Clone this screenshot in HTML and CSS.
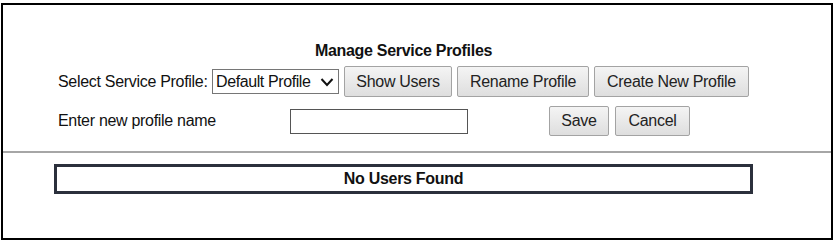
FILE: index.html
```html
<!DOCTYPE html>
<html>
<head>
  <meta charset="utf-8">
  <title>Manage Service Profiles</title>
  <link rel="stylesheet" href="styles.css">
</head>
<body>
  <div class="panel">
    <div class="profiles">
      <div class="profiles-title">Manage Service Profiles</div>
      <div class="row row-select">
        <label for="profileSelect" class="row-label">Select Service Profile:</label>
        <span class="select-wrap">
          <select id="profileSelect" class="profile-select">
            <option>Default Profile</option>
          </select>
          <svg class="select-arrow" width="14" height="10" viewBox="0 0 14 10">
            <path d="M1.5 2 L7 8 L12.5 2" fill="none" stroke="#111" stroke-width="2"/>
          </svg>
        </span>
        <button class="btn btn-show">Show Users</button>
        <button class="btn btn-rename">Rename Profile</button>
        <button class="btn btn-create">Create New Profile</button>
      </div>
      <div class="row row-rename">
        <label for="newName" class="row-label name-label">Enter new profile name</label>
        <input type="text" id="newName" class="name-input">
        <div class="rename-actions">
          <button class="btn btn-save">Save</button>
          <button class="btn btn-cancel">Cancel</button>
        </div>
      </div>
    </div>
    <hr class="divider">
    <div class="profiles">
      <div class="users-box">No Users Found</div>
    </div>
  </div>
</body>
</html>
```

FILE: styles.css
```css
body {
    margin: 3px 0 0 1px;
    font-family: "Liberation Sans", Arial, sans-serif;
    font-size: 16px;
    color: #111;
    background: #fff;
}

.panel {
    width: 828px;
    height: 233px;
    border: 2px solid #000;
    background: #fff;
}

.profiles {
    width: 699px;
    margin-left: 51px;
}

.profiles-title {
    margin-top: 37px;
    line-height: 18px;
    font-weight: bold;
    letter-spacing: -0.3px;
    text-align: center;
    white-space: nowrap;
}

.row {
    display: flex;
    align-items: center;
    padding-left: 4px;
    white-space: nowrap;
    letter-spacing: -0.3px;
}

.row > * {
    flex-shrink: 0;
}

.row-select {
    margin-top: 6px;
    height: 31px;
    gap: 5px;
}

.row-select .row-label {
    width: 149px;
}

.row-rename {
    margin-top: 9px;
    height: 30px;
}

.name-label {
    width: 232px;
}

.select-wrap {
    position: relative;
    display: inline-block;
    height: 25px;
}

.profile-select {
    -webkit-appearance: none;
    appearance: none;
    width: 127px;
    height: 25px;
    padding: 0 0 0 3px;
    border: 1px solid #767676;
    border-radius: 0;
    background: #fff;
    font-family: inherit;
    font-size: 16px;
    letter-spacing: -0.4px;
    color: #111;
}

.select-arrow {
    position: absolute;
    right: 5px;
    top: 8px;
    pointer-events: none;
}

.btn {
    height: 31px;
    padding: 0;
    border: 1px solid #a3a3a3;
    border-radius: 2px;
    background: linear-gradient(#f4f4f4, #dedede);
    font-family: inherit;
    font-size: 16px;
    letter-spacing: -0.3px;
    color: #222;
    white-space: nowrap;
    cursor: pointer;
}

.btn-show {
    width: 108px;
}

.btn-rename {
    width: 132px;
}

.btn-create {
    width: 155px;
}

.name-input {
    width: 178px;
    height: 25px;
    box-sizing: border-box;
    border: 1px solid #555;
    border-radius: 0;
    padding: 0 4px;
}

.rename-actions {
    display: flex;
    gap: 6px;
    margin-left: 81px;
}

.btn-save {
    width: 60px;
    height: 30px;
}

.btn-cancel {
    width: 75px;
    height: 30px;
}

.divider {
    margin: 15px 0 0;
    border: none;
    border-top: 2px solid #a6a6a6;
}

.users-box {
    margin-top: 11px;
    height: 24px;
    border: 3px solid #2b303c;
    line-height: 24px;
    text-align: center;
    font-weight: bold;
    letter-spacing: -0.3px;
}
```
